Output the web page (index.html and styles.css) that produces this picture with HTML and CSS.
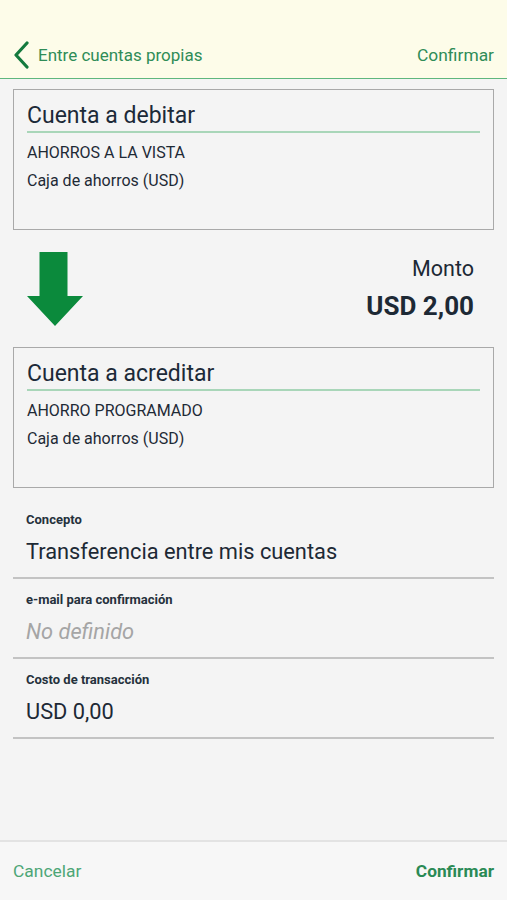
FILE: index.html
```html
<!DOCTYPE html>
<html lang="es">
<head>
  <meta charset="UTF-8">
  <title>Entre cuentas propias</title>
  <link rel="stylesheet" href="styles.css">
</head>
<body>
  <header class="topbar">
    <a class="back" href="#">
      <svg class="chevron" width="18" height="28" viewBox="0 0 18 28">
        <path d="M15 2 L4 14 L15 26" fill="none" stroke="#147a3e" stroke-width="3.2" stroke-linecap="round" stroke-linejoin="round"/>
      </svg>
      <span>Entre cuentas propias</span>
    </a>
    <a class="top-action" href="#">Confirmar</a>
  </header>

  <main class="content">
    <section class="account-card">
      <h2 class="card-title">Cuenta a debitar</h2>
      <p class="card-line">AHORROS A LA VISTA</p>
      <p class="card-line">Caja de ahorros (USD)</p>
    </section>

    <div class="amount-row">
      <svg class="arrow" width="58" height="75" viewBox="0 0 58 75">
        <path d="M13.5 0 H41.5 V44 H57 L29 74 L1 44 H13.5 Z" fill="#0b8a3c"/>
      </svg>
      <div class="amount">
        <div class="amount-label">Monto</div>
        <div class="amount-value">USD 2,00</div>
      </div>
    </div>

    <section class="account-card">
      <h2 class="card-title">Cuenta a acreditar</h2>
      <p class="card-line">AHORRO PROGRAMADO</p>
      <p class="card-line">Caja de ahorros (USD)</p>
    </section>

    <div class="fields">
      <div class="field">
        <div class="field-label">Concepto</div>
        <div class="field-value">Transferencia entre mis cuentas</div>
      </div>
      <div class="field">
        <div class="field-label">e-mail para confirmación</div>
        <div class="field-value empty">No definido</div>
      </div>
      <div class="field">
        <div class="field-label">Costo de transacción</div>
        <div class="field-value">USD 0,00</div>
      </div>
    </div>
  </main>

  <footer class="bottombar">
    <a class="cancel" href="#">Cancelar</a>
    <a class="confirm" href="#">Confirmar</a>
  </footer>
</body>
</html>
```

FILE: styles.css
```css
* {
  box-sizing: border-box;
  margin: 0;
  padding: 0;
  font-family: Roboto, 'Noto Sans', sans-serif;
}

body {
  background: #f4f4f4;
  color: #1d2935;
  min-height: 100vh;
  display: flex;
  flex-direction: column;
}

a {
  text-decoration: none;
}

.topbar {
  background: #fdfce9;
  height: 79px;
  padding: 32px 13px 0 12px;
  display: flex;
  align-items: center;
  justify-content: space-between;
  border-bottom: 1px solid #5fb77e;
}

.back {
  display: flex;
  align-items: center;
  gap: 8px;
  color: #2f8c57;
  font-size: 17px;
}

.chevron {
  display: block;
}

.top-action {
  color: #2f8c57;
  font-size: 17.4px;
}

.content {
  flex: 1;
  padding: 10px 13px 0;
}

.account-card {
  border: 1px solid #a9a9a9;
  height: 141px;
  padding: 11px 13px 0;
}

.card-title {
  font-size: 23px;
  font-weight: 400;
  line-height: 30px;
  border-bottom: 2px solid #a9d6b9;
  color: #1c2a38;
}

.card-title + .card-line {
  margin-top: 6px;
}

.card-line {
  font-size: 16px;
  line-height: 28px;
  color: #1e2a36;
}

.amount-row {
  height: 117px;
  padding: 22px 20px 0 13px;
  display: flex;
  justify-content: space-between;
  align-items: flex-start;
}

.arrow {
  display: block;
}

.amount {
  text-align: right;
  padding-top: 4px;
}

.amount-label {
  font-size: 21.5px;
  line-height: 26px;
}

.amount-value {
  font-size: 26px;
  font-weight: 700;
  line-height: 30px;
  margin-top: 9px;
}

.fields {
  margin-top: 11px;
}

.field {
  padding: 13px 13px 11px;
  border-bottom: 2px solid #c3c3c3;
}

.field-label {
  font-size: 13px;
  font-weight: 700;
  line-height: 16px;
  color: #25313c;
}

.field-value {
  font-size: 21.8px;
  line-height: 28px;
  margin-top: 10px;
}

.field-value.empty {
  color: #a5a5a5;
  font-style: italic;
}

.bottombar {
  height: 60px;
  background: #f7f7f7;
  border-top: 2px solid #e3e3e3;
  display: flex;
  align-items: center;
  justify-content: space-between;
  padding: 0 13px;
}

.cancel {
  color: #4da676;
  font-size: 17.4px;
}

.confirm {
  color: #2a8a55;
  font-size: 17.3px;
  font-weight: 700;
}
```
